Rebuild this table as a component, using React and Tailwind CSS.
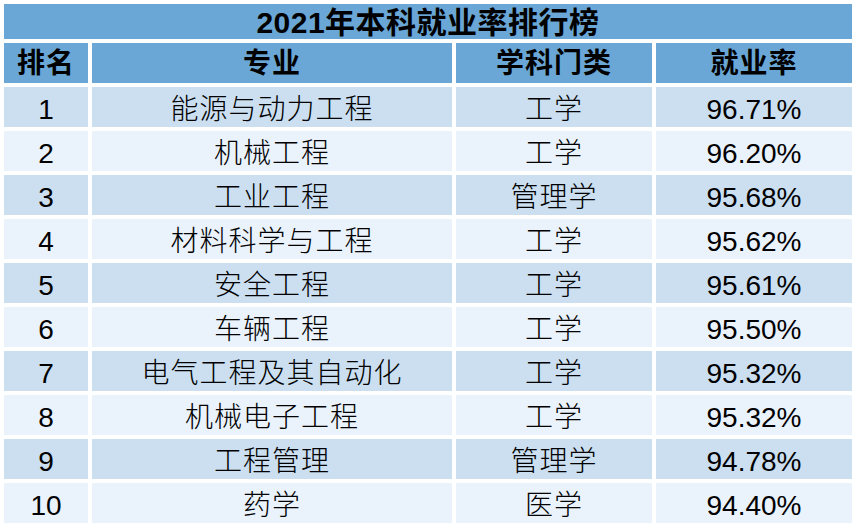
import React from 'react';

const rows = [
  ['1', '能源与动力工程', '工学', '96.71%'],
  ['2', '机械工程', '工学', '96.20%'],
  ['3', '工业工程', '管理学', '95.68%'],
  ['4', '材料科学与工程', '工学', '95.62%'],
  ['5', '安全工程', '工学', '95.61%'],
  ['6', '车辆工程', '工学', '95.50%'],
  ['7', '电气工程及其自动化', '工学', '95.32%'],
  ['8', '机械电子工程', '工学', '95.32%'],
  ['9', '工程管理', '管理学', '94.78%'],
  ['10', '药学', '医学', '94.40%'],
];

const font = { fontFamily: '"Liberation Sans", "Noto Sans CJK SC", sans-serif' };

const App = () => {
  return (
    <div className="w-[856px] h-[528px] bg-white p-[4px] text-black" style={font}>
      <div className="h-[35px] bg-[#6aa7d6] flex items-center justify-center text-[30px] font-bold tracking-[0.5px] leading-none pt-[2px]">
        2021年本科就业率排行榜
      </div>
      <div className="grid grid-cols-[84px_360px_196px_196px] gap-[4px] mt-[4px]">
        {['排名', '专业', '学科门类', '就业率'].map((h) => (
          <div
            key={h}
            className="h-[40px] bg-[#6aa7d6] flex items-center justify-center text-[28px] font-bold leading-none tracking-[1px] pt-[2px]"
          >
            {h}
          </div>
        ))}
        {rows.map((r, i) =>
          r.map((c, j) => (
            <div
              key={i + '-' + j}
              className={
                'h-[40px] flex items-center justify-center text-[28px] leading-none pt-[5px] ' +
                (j === 1 || j === 2 ? 'tracking-[1px] font-light ' : '') +
                (i % 2 === 0 ? 'bg-[#cbdff1]' : 'bg-[#eaf2fc]')
              }
            >
              {c}
            </div>
          ))
        )}
      </div>
    </div>
  );
};

export default App;
